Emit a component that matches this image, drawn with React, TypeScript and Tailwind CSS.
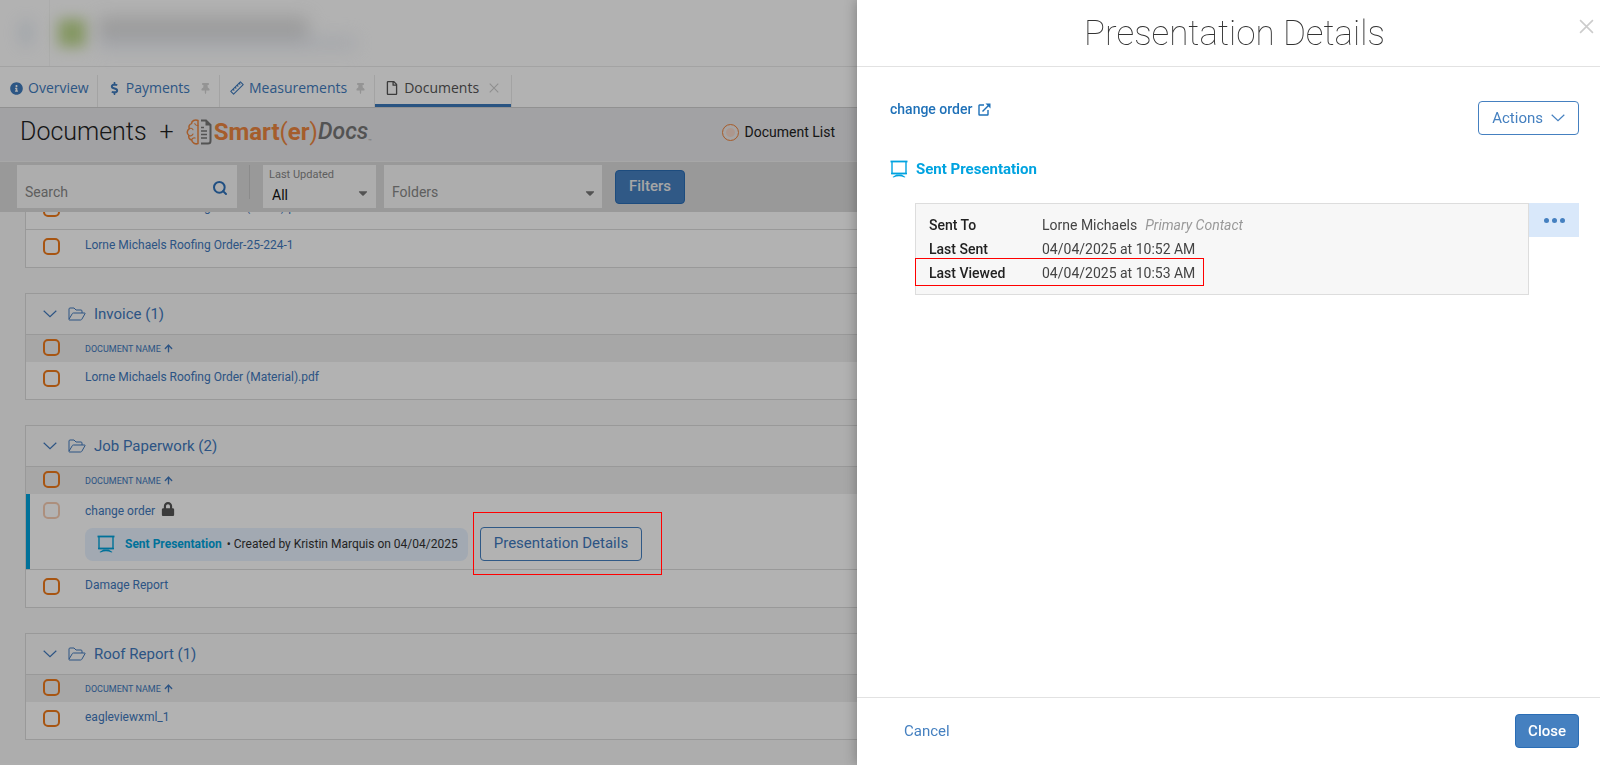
import type { ReactNode } from "react";
import { ArrowUp, Search } from "lucide-react";
import { FaCaretDown, FaDollarSign, FaInfoCircle, FaLock, FaRegFile, FaThumbtack } from "react-icons/fa";

type Doc = { name: string; sent?: boolean };

const groups: { title: string; docs: Doc[] }[] = [
  { title: "Invoice (1)", docs: [{ name: "Lorne Michaels Roofing Order (Material).pdf" }] },
  { title: "Job Paperwork (2)", docs: [{ name: "change order", sent: true }, { name: "Damage Report" }] },
  { title: "Roof Report (1)", docs: [{ name: "eagleviewxml_1" }] },
];

const details = [
  { label: "Sent To", value: "Lorne Michaels", note: "Primary Contact" },
  { label: "Last Sent", value: "04/04/2025 at 10:52 AM" },
  { label: "Last Viewed", value: "04/04/2025 at 10:53 AM", marked: true },
];

function Chevron() {
  return (
    <svg width="14" height="8" viewBox="0 0 14 8" fill="none" stroke="currentColor" strokeWidth="1.2">
      <path d="M0.7 0.8 7 6.6 13.3 0.8" />
    </svg>
  );
}

function Cross({ size }: { size: number }) {
  return (
    <svg width={size} height={size} viewBox="0 0 14 14" fill="none" stroke="currentColor" strokeWidth="1.5">
      <path d="M1 1 13 13M13 1 1 13" />
    </svg>
  );
}

function FolderIcon() {
  return (
    <svg width="18" height="14" viewBox="0 0 18 14" fill="none" stroke="currentColor" strokeWidth="1" strokeLinejoin="round">
      <path d="M1 12V2Q1 1 2 1h4l2 2h5q1 0 1 1v2" />
      <path d="M1 12.2 4.4 6.5q.3-.5 1-.5H16.6q.8 0 .4.7l-3.2 5.6q-.4.7-1.2.7H1.5q-.8 0-.5-.8Z" />
    </svg>
  );
}

function BoardIcon() {
  return (
    <svg width="18" height="18" viewBox="0 0 18 18" fill="none" stroke="currentColor" strokeWidth="1.4">
      <path d="M0.5 1.5h17" strokeWidth="1.8" />
      <path d="M2 1.5v12h14v-12" />
      <path d="M1 13.5h16" />
      <path d="M6.5 14.6h5L15.5 17l-1 .6Q9 14.8 3.5 17.6l-1-.6Z" fill="currentColor" stroke="none" />
    </svg>
  );
}

function RulerIcon() {
  return (
    <svg width="14" height="14" viewBox="0 0 14 14" fill="none" stroke="currentColor" strokeWidth="1.1" strokeLinejoin="round">
      <path d="M0.8 10.4 10.4.8l2.8 2.8L3.6 13.2Z" />
      <path d="m3 8.2 1.3 1.3M5 6.2l1.3 1.3M7 4.2l1.3 1.3M9 2.2l1.3 1.3" />
    </svg>
  );
}

function ExternalIcon() {
  return (
    <svg width="13" height="13" viewBox="0 0 13 13" fill="none" stroke="currentColor" strokeWidth="1.4">
      <path d="M6 2H1.5Q1 2 1 2.5v9q0 .5.5.5h8q.5 0 .5-.5V7" />
      <path d="M4.5 8.5 11 2" />
      <path d="M7.5.5h5v5Z" fill="currentColor" stroke="none" />
    </svg>
  );
}

function LogoMark() {
  return (
    <svg width="26" height="26" viewBox="0 0 26 26" fill="none">
      <g stroke="#ec8640" strokeWidth="1.5" strokeLinecap="round" strokeLinejoin="round">
        <path d="M12 1.5C9 0 5.5 2 5.6 4.6 3 5.3 2.5 8 3.4 9.6.6 11.5.6 14.8 3 16.5c-.9 2.3.8 4.3 2.7 4.4C6 24 9.500 25.600 12 24.500Z" />
        <path d="M12 6.500C10.500 6.500 9 5.800 8.800 4.500M3.400 9.600c1.500-.7 3-.1 3.600 1.100M3 16.500c1.300.8 3.300.2 4-1.500M5.700 20.900c.3-1.500 1.800-2.400 3.400-1.800" strokeWidth="1.1" />
      </g>
      <path d="M15 1.5h5l4.500 4.500V22q0 2.500-2.500 2.500h-7" stroke="#777" strokeWidth="2" />
      <path d="M19.5 1v5.500H25Z" fill="#777" />
      <path d="M15 8.500h3M15 12h6M15 15.500h6M15 19h6" stroke="#777" strokeWidth="1.5" />
    </svg>
  );
}

function Check({ label, disabled }: { label: string; disabled?: boolean }) {
  return (
    <input
      type="checkbox"
      aria-label={label}
      disabled={disabled}
      className="block size-[17px] appearance-none rounded-[5px] border-2 border-[#f07a1a] disabled:border-[#f7cdb4]"
    />
  );
}

function Tab({ icon, label, end, active }: { icon: ReactNode; label: string; end?: ReactNode; active?: boolean }) {
  return (
    <div className={`flex h-8 items-center border-r border-[#eaeaea] pr-2 pb-[6px] pl-[10px] ${active ? "text-[#555] shadow-[0_-3px_0_0_#3c79bb_inset]" : "text-[#3f7bbd]"}`}>
      <a href="#" className="flex items-center gap-[5px] whitespace-nowrap">
        {icon}
        {label}
      </a>
      {end}
    </div>
  );
}

function DocRow({ doc }: { doc: Doc }) {
  if (doc.sent) {
    return (
      <tr className="align-top">
        <td className="border-b border-[#dcdcdc] pt-2 pl-[17px] shadow-[inset_4px_0_0_#00a3dc]">
          <Check label={doc.name} disabled />
        </td>
        <td className="border-b border-[#dcdcdc] pt-2 pb-2">
          <div className="flex h-[18px] items-center gap-[6px]">
            <a href="#">{doc.name}</a>
            <FaLock size={14} className="mb-1 text-[#555]" />
          </div>
          <div className="mt-[7px] flex items-center gap-3">
            <div className="flex h-[33px] items-center rounded-lg bg-[#e8f2ff] pr-[10px] pl-3 text-[#333]">
              <span className="text-[#00a3dc]"><BoardIcon /></span>
              <b className="mr-[5px] ml-[10px] font-bold text-[#00a3dc]">Sent Presentation</b>
              • Created by Kristin Marquis on 04/04/2025
            </div>
            <div className="relative">
              <button className="h-[34px] rounded border border-[#4580c0] px-[13px] text-[15px]">Presentation Details</button>
              <div className="pointer-events-none absolute -top-[15px] -right-5 -bottom-[14px] -left-[7px] z-20 border border-[#f00]" />
            </div>
          </div>
        </td>
      </tr>
    );
  }
  return (
    <tr className="group h-[38px] align-top last:h-[37px]">
      <td className="border-b border-[#dcdcdc] pt-2 pl-[17px] group-last:border-b-0">
        <Check label={doc.name} />
      </td>
      <td className="border-b border-[#dcdcdc] pt-[7px] leading-4 group-last:border-b-0">
        <a href="#">{doc.name}</a>
      </td>
    </tr>
  );
}

function Group({ title, docs }: { title: string; docs: Doc[] }) {
  return (
    <section className="border border-[#dcdcdc] bg-white text-[#4179bd]">
      <button className="flex h-[41px] w-full items-center border-b border-[#dcdcdc] bg-[#fafafa] pl-[17px] text-[15px]">
        <Chevron />
        <span className="mr-2 ml-[11px]"><FolderIcon /></span>
        {title}
      </button>
      <table className="w-full table-fixed border-separate border-spacing-0 text-left text-xs">
        <thead>
          <tr className="h-[27px] bg-[#efefef]">
            <th className="w-[59px] pb-[2px] pl-[17px]">
              <Check label={`Select all in ${title}`} />
            </th>
            <th>
              <button className="flex items-center gap-[2px] text-[9px] font-normal">
                DOCUMENT NAME
                <ArrowUp size={11} strokeWidth={3} />
              </button>
            </th>
          </tr>
        </thead>
        <tbody>
          {docs.map((doc) => <DocRow key={doc.name} doc={doc} />)}
        </tbody>
      </table>
    </section>
  );
}

function DetailsPanel() {
  return (
    <aside className="fixed inset-y-0 right-0 z-30 flex w-[743px] max-w-full flex-col bg-white shadow-[0_0_12px_rgba(0,0,0,0.3)]">
      <header className="relative border-b border-[#e2e2e2]">
        <h2 className="pt-[13px] pb-[11px] pl-3 text-center text-[35px] leading-[42px] font-thin text-[#333]">Presentation Details</h2>
        <button aria-label="Close panel" className="absolute top-[19px] right-[6px] text-[#ccc]">
          <Cross size={15} />
        </button>
      </header>
      <div className="flex-1 pt-[34px] pr-[21px] pl-[33px]">
        <div className="flex items-start justify-between">
          <a href="#" className="flex items-center gap-[6px] text-sm leading-4 font-medium text-[#1f71b8]">
            change order
            <ExternalIcon />
          </a>
          <button className="flex h-[34px] items-center gap-2 rounded border border-[#4580c0] px-[13px] text-[15px] text-[#4580c0]">
            Actions
            <Chevron />
          </button>
        </div>
        <h3 className="mt-6 flex items-center gap-2 text-[15px] leading-5 font-bold text-[#00a3e0]">
          <BoardIcon />
          Sent Presentation
        </h3>
        <div className="mt-6 ml-[25px] flex items-start">
          <dl className="flex-1 border border-[#ddd] bg-[#f7f7f7] py-[9px] text-sm leading-6 text-[#444]">
            {details.map((d) => (
              <div key={d.label} className="relative flex px-[13px]">
                <dt className="w-[113px] font-medium text-[#222]">{d.label}</dt>
                <dd>
                  {d.value}
                  {d.note && <i className="ml-2 text-[#999]">{d.note}</i>}
                </dd>
                {d.marked && <div className="pointer-events-none absolute -top-[3px] -bottom-px -left-px w-[289px] border border-[#f00]" />}
              </div>
            ))}
          </dl>
          <button aria-label="More options" className="flex h-[34px] w-[50px] items-center justify-center gap-[3px] bg-[#d9e8fa]">
            <i className="size-[5px] rounded-full bg-[#4580c0]" />
            <i className="size-[5px] rounded-full bg-[#4580c0]" />
            <i className="size-[5px] rounded-full bg-[#4580c0]" />
          </button>
        </div>
      </div>
      <footer className="flex items-center justify-between border-t border-[#e2e2e2] pt-4 pr-[21px] pb-[17px] pl-[47px] text-[15px]">
        <button className="text-[#4580c0]">Cancel</button>
        <button className="h-[34px] rounded border border-[#2a6db5] bg-[#4580c0] px-3 font-medium text-white">Close</button>
      </footer>
    </aside>
  );
}

export default function App() {
  return (
    <div className="relative flex h-screen flex-col overflow-hidden bg-[#f8f8f8] font-['Roboto','Liberation_Sans',sans-serif]">
      <header className="h-[67px] shrink-0 border-b border-[#eaeaea] bg-white">
        <div className="flex h-full w-[50px] items-center border-r border-[#f6f6f6]">
          <div className="ml-5 h-6 w-3 shrink-0 bg-[#b9cbe0] opacity-40 blur-sm" />
          <div className="ml-[26px] size-7 shrink-0 bg-[#bfd98f] blur-[7px]" />
          <div className="ml-3 shrink-0 opacity-60 blur-[9px]">
            <div className="h-5 w-[210px] bg-[#c8c8c8]" />
            <div className="h-3 w-[258px] bg-[#dce2ee]" />
          </div>
        </div>
      </header>

      <nav className="flex h-[41px] shrink-0 items-end border-b border-[#d0d0d0] bg-white font-['Open_Sans',sans-serif] text-sm">
        <Tab icon={<FaInfoCircle size={13} />} label="Overview" />
        <Tab icon={<FaDollarSign size={13} />} label="Payments" end={<FaThumbtack size={11} className="ml-[10px] text-[#d4d4d4]" />} />
        <Tab icon={<RulerIcon />} label="Measurements" end={<FaThumbtack size={11} className="ml-2 text-[#d4d4d4]" />} />
        <Tab active icon={<FaRegFile size={14} />} label="Documents" end={<span className="mr-1 ml-[10px] text-[#ccc]"><Cross size={10} /></span>} />
      </nav>

      <div className="flex h-[54px] shrink-0 items-center border-b border-[#f0f0f0] bg-[#e8e8eb] pb-[5px] pl-5 text-[#222]">
        <h1 className="text-[25px] font-light">Documents</h1>
        <span className="ml-[13px] text-[25px] font-light">+</span>
        <div className="ml-3 flex items-center">
          <LogoMark />
          <span className="ml-[2px] text-2xl font-bold text-[#ec8640]">Smart<span className="font-normal">(</span>er<span className="font-normal">)</span></span>
          <span className="text-[23px] font-medium text-[#777] italic">Docs</span>
          <span className="self-end pb-1 text-[6px] text-[#999]">™</span>
        </div>
        <label className="ml-auto flex items-center gap-[6px] pr-[765px] text-sm whitespace-nowrap">
          <input type="radio" name="view" className="size-[17px] appearance-none rounded-full border border-[#ec8640] bg-[#f7d9cc] shadow-[inset_0_0_0_3px_#eeebeb]" />
          Document List
        </label>
      </div>

      <div className="flex h-[50px] shrink-0 items-start bg-[#dcdcdc] pt-[3px] pl-[17px] text-sm text-[#888]">
        <label className="flex h-[43px] w-[220px] items-end bg-[#f8f8f8] pr-[9px] pb-[6px] pl-2">
          <input aria-label="Search" placeholder="Search" className="min-w-0 flex-1 placeholder-[#888] outline-none" />
          <Search size={16} strokeWidth={3} className="mb-[6px] text-[#2f72bb]" />
        </label>
        <div className="mx-3 h-[34px] w-px bg-[#c8c8c8]" />
        <div className="relative ml-px h-[43px] w-[113px] bg-[#f8f8f8] pt-[2px]">
          <label htmlFor="updated" className="block pl-[6px] text-[11px] leading-4">Last Updated</label>
          <select id="updated" className="h-[23px] w-full appearance-none pl-[9px] text-[#111]">
            <option>All</option>
          </select>
          <FaCaretDown size={14} className="pointer-events-none absolute right-[6px] bottom-2 text-[#777]" />
        </div>
        <div className="relative ml-2 h-[43px] w-[218px] bg-[#f8f8f8] pt-4">
          <select aria-label="Folders" className="h-[22px] w-full appearance-none pl-2">
            <option>Folders</option>
          </select>
          <FaCaretDown size={14} className="pointer-events-none absolute right-[5px] bottom-2 text-[#777]" />
        </div>
        <button className="mt-[5px] ml-[13px] h-[34px] rounded border border-[#2a6db5] bg-[#4580c0] px-[13px] text-[15px] font-medium text-[#eee]">Filters</button>
      </div>

      <main className="min-h-0 flex-1 overflow-hidden pl-[25px]">
        <div className="-mt-5 flex flex-col gap-[25px]">
          <section className="border border-t-0 border-[#dcdcdc] bg-white text-xs text-[#4179bd]">
            <table className="w-full table-fixed border-separate border-spacing-0 text-left">
              <colgroup>
                <col className="w-[59px]" />
                <col />
              </colgroup>
              <tbody>
                <DocRow doc={{ name: "Lorne Michaels Roofing Order (Labor).pdf" }} />
                <DocRow doc={{ name: "Lorne Michaels Roofing Order-25-224-1" }} />
              </tbody>
            </table>
          </section>
          {groups.map((g) => <Group key={g.title} title={g.title} docs={g.docs} />)}
        </div>
      </main>

      <div className="pointer-events-none absolute inset-0 z-10 bg-black/30" />
      <DetailsPanel />
    </div>
  );
}
